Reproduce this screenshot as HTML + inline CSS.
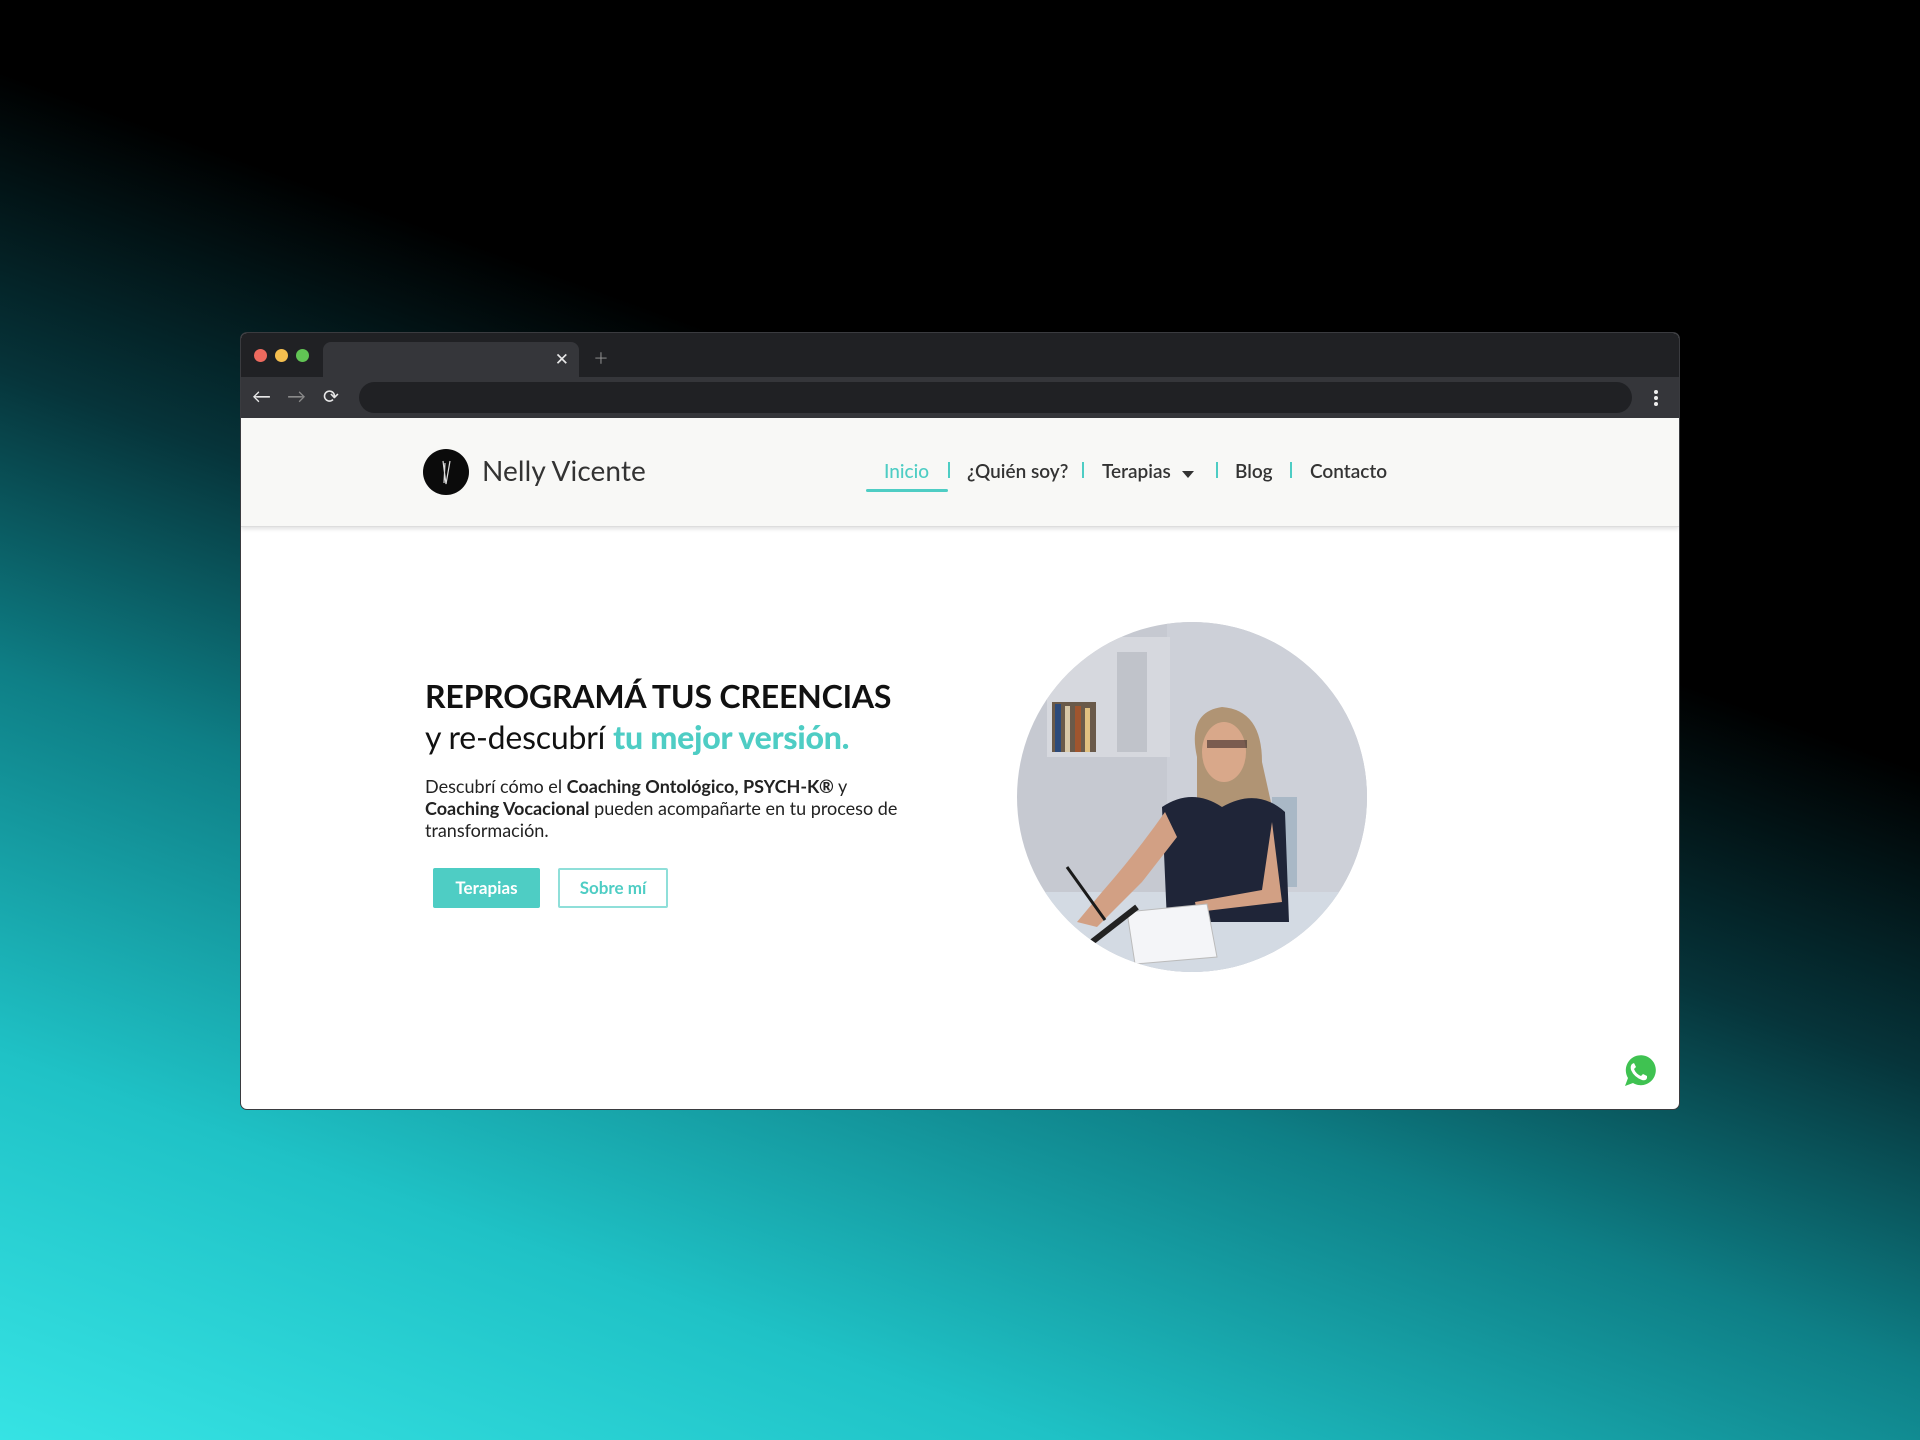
<!DOCTYPE html>
<html><head><meta charset="utf-8"><style>
*{margin:0;padding:0;box-sizing:border-box}
body{width:1920px;height:1440px;overflow:hidden;position:relative;font-family:"Lato","Liberation Sans",sans-serif;
background:linear-gradient(200deg,#000 0%,#000 36%,#06343a 50%,#0e7f86 64%,#1fc2c6 82%,#36e3e4 100%);}
.win{position:absolute;left:241px;top:333px;width:1438px;height:776px;background:#fff;border-radius:6px;overflow:hidden;box-shadow:0 0 0 1px #3a3b3f}
.tabs{height:44px;background:#202124;position:relative}
.dot{position:absolute;top:16px;width:13px;height:13px;border-radius:50%}
.tab{position:absolute;left:82px;top:9px;width:256px;height:35px;background:#35363a;border-radius:8px 8px 0 0}
.tab span{position:absolute;right:10px;top:6px;color:#e8e8e8;font-size:17px}
.plus{position:absolute;left:353px;top:10px;color:#9a9a9a;font-size:24px;font-weight:300}
.addr{height:41px;background:#35363a;position:relative}
.url{position:absolute;left:118px;top:5px;width:1273px;height:31px;border-radius:16px;background:#202124}
.ico{position:absolute;top:8px;color:#e8e8e8;font-size:19px}
.nav{height:109px;background:#f8f8f6;position:relative;border-bottom:1px solid #ddd;box-shadow:0 2px 4px rgba(0,0,0,.12)}
.logo{position:absolute;left:182px;top:31px;width:46px;height:46px;border-radius:50%;background:#0b0b0b}
.brand{position:absolute;left:241px;top:35px;font-size:28px;color:#333;letter-spacing:.1px}
.menu{position:absolute;top:42px;font-size:19px;color:#333;font-weight:600}
.sep{position:absolute;top:44px;width:2px;height:16px;background:#4ecdc4}
.h1{position:absolute;left:425px;top:676px;font-size:32px;font-weight:700;color:#111;letter-spacing:-.2px}
.h2{position:absolute;left:425px;top:717px;font-size:32px;color:#111;letter-spacing:-.2px}
.h2 b{color:#4ecdc4;font-weight:900}
.p{position:absolute;left:425px;top:775px;width:480px;font-size:18px;line-height:22px;color:#222}
.btn1{position:absolute;left:433px;top:868px;width:107px;height:40px;background:#4ecdc4;color:#fff;border-radius:2px;font-weight:700;font-size:17px;text-align:center;line-height:40px}
.btn2{position:absolute;left:558px;top:868px;width:110px;height:40px;border:2px solid #8fdfd9;color:#4ecdc4;border-radius:2px;font-weight:700;font-size:17px;text-align:center;line-height:36px}
</style></head><body>
<div class="win">
 <div class="tabs">
  <div class="dot" style="left:13px;background:#ed6a5e"></div>
  <div class="dot" style="left:34px;background:#f5bf4f"></div>
  <div class="dot" style="left:55px;background:#61c454"></div>
  <div class="tab"><span>✕</span></div>
  <div class="plus">+</div>
 </div>
 <div class="addr">
  <div class="ico" style="left:11px">←</div>
  <div class="ico" style="left:46px;color:#8a8a8a">→</div>
  <div class="ico" style="left:82px">⟳</div>
  <div class="url"></div>
  <div style="position:absolute;left:1413px;top:13px;width:4px">
   <div style="width:4px;height:4px;border-radius:2px;background:#eee;margin-bottom:2px"></div>
   <div style="width:4px;height:4px;border-radius:2px;background:#eee;margin-bottom:2px"></div>
   <div style="width:4px;height:4px;border-radius:2px;background:#eee"></div>
  </div>
 </div>
 <div class="nav">
  <div class="logo"><svg width="46" height="46"><path d="M20 12 L23 35 L27 12 M22 14 L21 34" stroke="#ddd" stroke-width="1.2" fill="none"/></svg></div>
  <div class="brand">Nelly Vicente</div>
  <div class="menu" style="left:643px;color:#4ecdc4;font-weight:500">Inicio</div>
  <div style="position:absolute;left:625px;top:71px;width:82px;height:3px;background:#4ecdc4;border-radius:2px"></div>
  <div class="sep" style="left:707px"></div>
  <div class="menu" style="left:726px">¿Quién soy?</div>
  <div class="sep" style="left:841px"></div>
  <div class="menu" style="left:861px">Terapias</div>
  <div style="position:absolute;left:941px;top:53px;border-left:6px solid transparent;border-right:6px solid transparent;border-top:7px solid #333"></div>
  <div class="sep" style="left:975px"></div>
  <div class="menu" style="left:994px">Blog</div>
  <div class="sep" style="left:1049px"></div>
  <div class="menu" style="left:1069px">Contacto</div>
 </div>
</div>
<div class="h1">REPROGRAMÁ TUS CREENCIAS</div>
<div class="h2">y re-descubrí <b>tu mejor versión.</b></div>
<div class="p">Descubrí cómo el <b>Coaching Ontológico, PSYCH-K®</b> y <b>Coaching Vocacional</b> pueden acompañarte en tu proceso de transformación.</div>
<div class="btn1">Terapias</div>
<div class="btn2">Sobre mí</div>
<svg style="position:absolute;left:1017px;top:622px" width="350" height="350" viewBox="0 0 350 350">
 <defs><clipPath id="c"><circle cx="175" cy="175" r="175"/></clipPath></defs>
 <g clip-path="url(#c)">
  <rect width="350" height="350" fill="#c6c9d1"/>
  <rect x="150" y="0" width="200" height="350" fill="#cdd0d8"/>
  <rect x="30" y="15" width="123" height="120" fill="#d6d8de"/>
  <rect x="35" y="80" width="44" height="50" fill="#6a5a4a"/>
  <rect x="38" y="82" width="6" height="48" fill="#2c4a7a"/><rect x="48" y="84" width="5" height="46" fill="#d8c8a8"/><rect x="58" y="84" width="6" height="46" fill="#a0552e"/><rect x="68" y="86" width="5" height="44" fill="#e0c080"/>
  <rect x="100" y="30" width="30" height="100" fill="#c0c3ca"/>
  <rect x="0" y="270" width="350" height="80" fill="#d3dae3"/>
  <rect x="255" y="175" width="25" height="90" fill="#a9b8c6"/>
  <path d="M180 135 Q170 90 205 85 Q245 88 245 140 L255 185 L180 185Z" fill="#b09474"/>
  <ellipse cx="207" cy="130" rx="22" ry="30" fill="#d9a88a"/>
  <rect x="190" y="118" width="40" height="8" fill="#3a2a2a" opacity=".6"/>
  <path d="M145 185 Q175 165 205 185 Q240 165 268 190 L272 300 L150 300 Z" fill="#1f2538"/>
  <path d="M148 190 Q120 230 85 270 L60 300 L80 305 L125 260 L160 215Z" fill="#d2a084"/>
  <path d="M255 200 L265 280 L180 290 L178 280 L245 268Z" fill="#d2a084"/>
  <path d="M110 290 L190 282 L200 335 L118 342Z" fill="#f4f5f8" stroke="#bbb"/>
  <path d="M50 245 L88 298" stroke="#1a1a1a" stroke-width="3"/>
  <path d="M75 320 L120 285" stroke="#222" stroke-width="6"/>
 </g>
</svg>
<svg style="position:absolute;left:1617px;top:1051px" width="42" height="42" viewBox="0 0 42 42">
 <circle cx="21" cy="20" r="19" fill="#fff"/>
 <path d="M8 35 L11 27 A15 15 0 1 1 16 32 Z" fill="#3fc251"/>
 <path d="M15 13 Q13 15 14 19 Q17 26 25 29 Q29 30 30 27 L30 25 L26 23 L24 25 Q19 23 17 18 L19 16 L17 12 Z" fill="#fff"/>
</svg>
</body></html>
